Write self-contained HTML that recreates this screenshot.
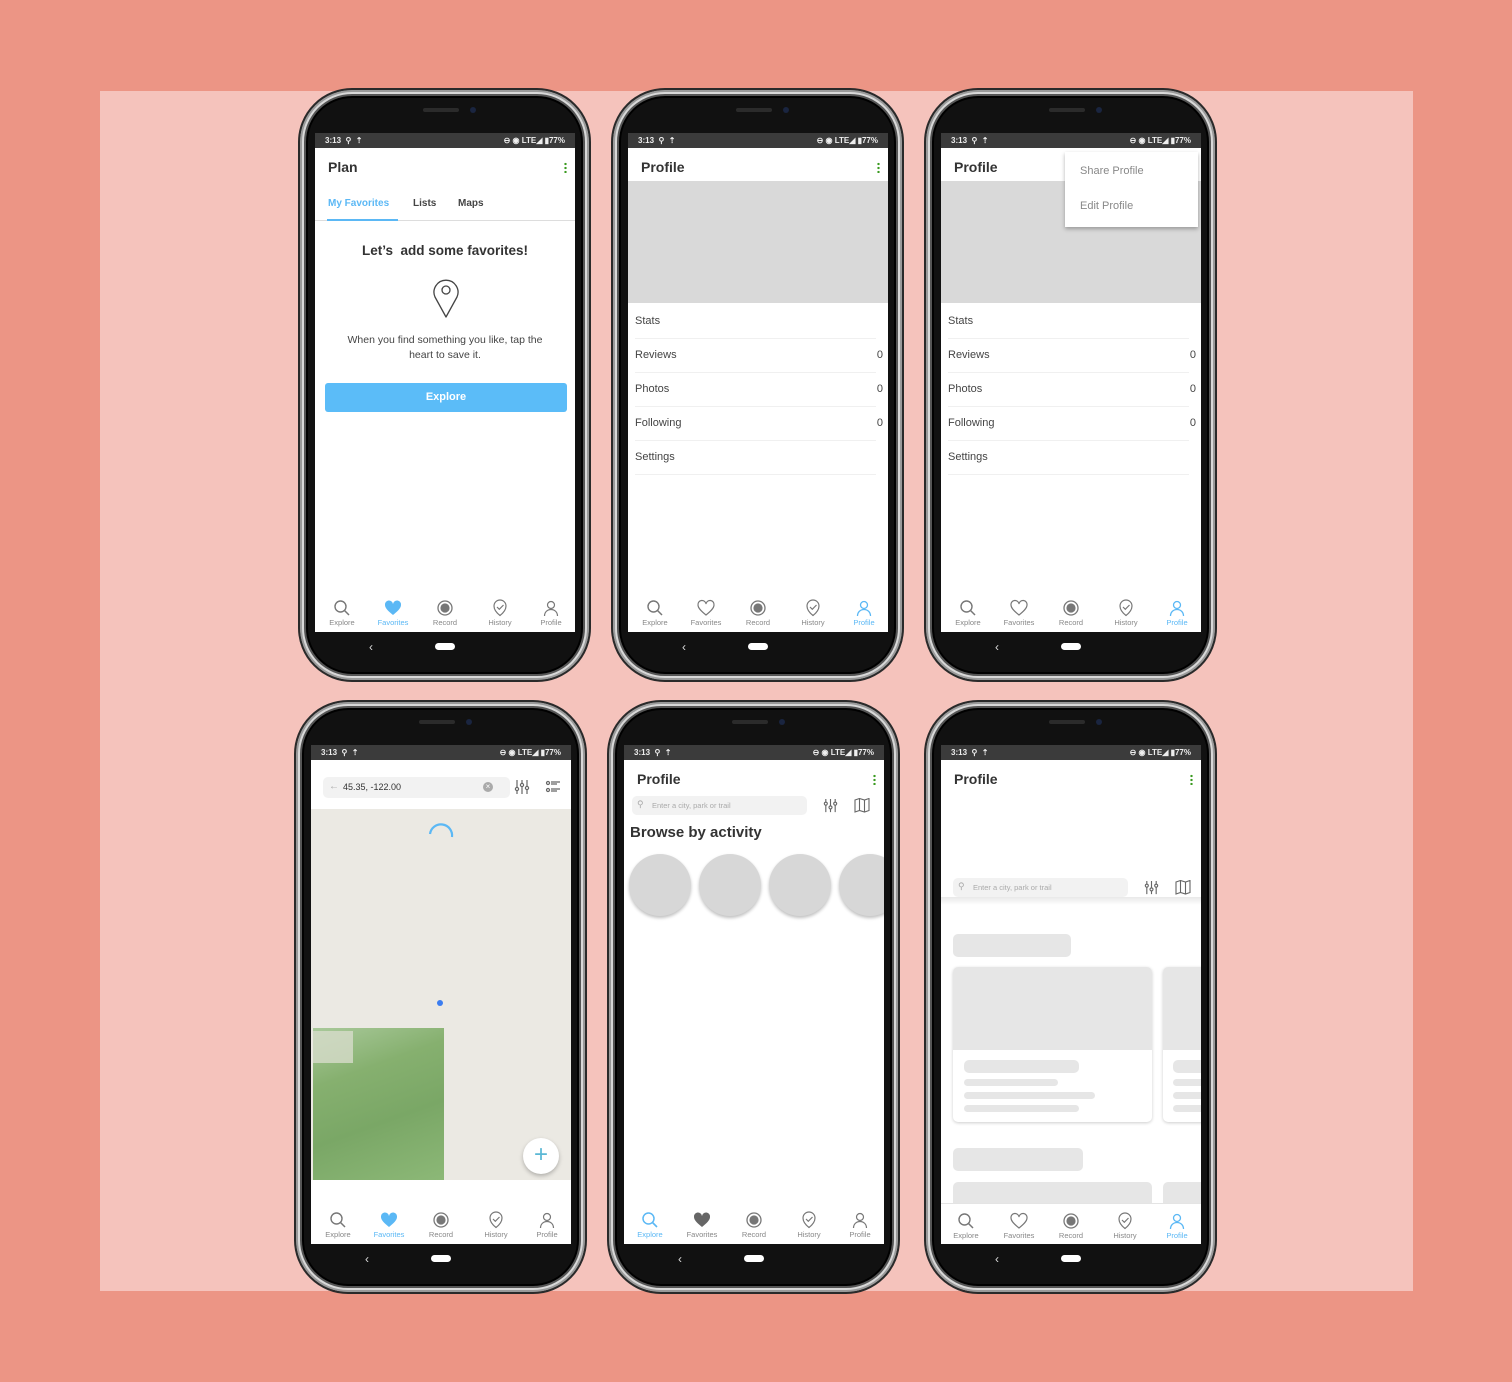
<!DOCTYPE html>
<html><head><meta charset="utf-8"><style>
*{margin:0;padding:0;box-sizing:border-box}
body{width:1512px;height:1382px;overflow:hidden;background:#ec9585;font-family:"Liberation Sans",sans-serif;position:relative;color:#444}
.panel{position:absolute;left:100px;top:91px;width:1313px;height:1200px;background:#f5c3bc}
.ph{position:absolute;width:293px;height:594px;border-radius:54px;background:#111;border:2px solid #2a2a2a;box-shadow:inset 0 0 0 2px #9a9a9a,inset 0 0 0 4px #d8d8d8,inset 0 0 0 6px #555,inset 0 0 0 8px #000}
.ph .spk{position:absolute;left:123px;top:18px;width:36px;height:4px;border-radius:2px;background:#2b2b2b}
.ph .cam{position:absolute;left:170px;top:17px;width:6px;height:6px;border-radius:3px;background:#1a2540}
.ph .back{position:absolute;left:69px;top:550px;color:#ddd;font-size:12px}
.ph .home{position:absolute;left:135px;top:553px;width:20px;height:7px;border-radius:4px;background:#fff}
.sc{position:absolute;left:15px;top:43px;width:260px;height:499px;background:#fff;overflow:hidden}
.sb{position:absolute;left:0;top:0;width:260px;height:15px;background:#3b3b3b;color:#eee;font-size:8px;font-weight:bold;line-height:15px}
.sb .l{position:absolute;left:10px}.sb .r{position:absolute;right:10px}
.a{position:absolute;white-space:nowrap}
.ttl{font-size:14px;font-weight:bold;color:#333}
.dots{position:absolute;width:3px;height:11px;background:radial-gradient(circle,#3a9a20 1.1px,transparent 1.3px) 0 0/3px 4px}
.tb{position:absolute;left:0;top:460px;width:260px;height:39px;background:#fff}
.tb .it{position:absolute;top:6px;width:50px;margin-left:-25px;text-align:center;font-size:7.5px;color:#888}
.tb .it svg{display:block;margin:0 auto 1px}
.tb .on{color:#5bb8f5}
.row{position:absolute;left:7px;width:241px;height:34px;border-bottom:1.5px solid #f0f0f0;font-size:11px;color:#444}
.row span{position:absolute;top:10px}
.row b{position:absolute;right:-7px;top:10px;font-weight:normal}
.sk{position:absolute;background:#e6e6e6;border-radius:5px}
</style></head><body>
<div class="panel"></div>

<!-- PHONE 1 -->
<div class="ph" style="left:298px;top:88px">
<div class="spk"></div><div class="cam"></div><div class="back">‹</div><div class="home"></div>
<div class="sc">
<div class="sb"><span class="l">3:13 &nbsp;⚲ &nbsp;⇡</span><span class="r">⊖ ◉ LTE◢ ▮77%</span></div>
<div class="a ttl" style="left:13px;top:26px">Plan</div>
<div class="dots" style="left:249px;top:29px"></div>
<div class="a" style="left:13px;top:65px;font-size:10px;font-weight:bold;color:#5bb8f5">My Favorites</div>
<div class="a" style="left:98px;top:65px;font-size:10px;font-weight:bold;color:#444">Lists</div>
<div class="a" style="left:143px;top:65px;font-size:10px;font-weight:bold;color:#444">Maps</div>
<div class="a" style="left:0;top:87px;width:260px;height:1px;background:#ddd"></div>
<div class="a" style="left:12px;top:86px;width:71px;height:2px;background:#5bb8f5"></div>
<div class="a" style="left:0;width:260px;text-align:center;top:110px;font-size:13.5px;font-weight:bold;color:#333">Let’s &nbsp;add some favorites!</div>
<svg class="a" style="left:117px;top:144px" width="28" height="42" viewBox="0 0 28 42"><path d="M14 40 L3 20 A12 12 0 1 1 25 20 Z" fill="none" stroke="#444" stroke-width="1.3" stroke-linejoin="round"/><circle cx="14" cy="13" r="4" fill="none" stroke="#444" stroke-width="1.3"/></svg>
<div class="a" style="left:0;width:260px;text-align:center;top:200px;font-size:10.5px;line-height:15px;color:#444;white-space:normal">When you find something you like, tap the<br>heart to save it.</div>
<div class="a" style="left:10px;top:250px;width:242px;height:29px;background:#5bbcf8;border-radius:3px;color:#fff;font-size:11px;font-weight:bold;text-align:center;line-height:29px">Explore</div>
<div class="tb">
<div class="it" style="left:27px"><svg width="18" height="18" viewBox="0 0 18 18"><circle cx="7.5" cy="7.5" r="5.5" fill="none" stroke="#777" stroke-width="1.4"/><path d="M11.5 11.5L16 16" stroke="#777" stroke-width="1.5"/></svg>Explore</div>
<div class="it on" style="left:78px"><svg width="18" height="18" viewBox="0 0 18 18"><path d="M9 16C4 12 1 9 1 6a4 4 0 0 1 8-1a4 4 0 0 1 8 1c0 3-3 6-8 10z" fill="#5bb8f5"/></svg>Favorites</div>
<div class="it" style="left:130px"><svg width="18" height="18" viewBox="0 0 18 18"><circle cx="9" cy="9" r="7" fill="none" stroke="#777" stroke-width="1.3"/><circle cx="9" cy="9" r="4.6" fill="#777"/></svg>Record</div>
<div class="it" style="left:185px"><svg width="18" height="18" viewBox="0 0 18 18"><path d="M9 16.5C4.5 13 3 10 3 7a6 6 0 0 1 12 0c0 3-1.5 6-6 9.5z" fill="none" stroke="#777" stroke-width="1.2"/><path d="M6 8l2.3 2.3L12.5 6" fill="none" stroke="#777" stroke-width="1.2"/></svg>History</div>
<div class="it" style="left:236px"><svg width="18" height="18" viewBox="0 0 18 18"><circle cx="9" cy="6" r="3.5" fill="none" stroke="#777" stroke-width="1.2"/><path d="M2.5 17c0-4 3-6.5 6.5-6.5s6.5 2.5 6.5 6.5" fill="none" stroke="#777" stroke-width="1.2"/></svg>Profile</div>
</div>
</div></div>

<!-- PHONE 2 -->
<div class="ph" style="left:611px;top:88px">
<div class="spk"></div><div class="cam"></div><div class="back">‹</div><div class="home"></div>
<div class="sc">
<div class="sb"><span class="l">3:13 &nbsp;⚲ &nbsp;⇡</span><span class="r">⊖ ◉ LTE◢ ▮77%</span></div>
<div class="a ttl" style="left:13px;top:26px">Profile</div>
<div class="dots" style="left:249px;top:29px"></div>
<div class="a" style="left:0;top:48px;width:260px;height:122px;background:#d9d9d9"></div>
<div class="row" style="top:172px"><span>Stats</span></div>
<div class="row" style="top:206px"><span>Reviews</span><b>0</b></div>
<div class="row" style="top:240px"><span>Photos</span><b>0</b></div>
<div class="row" style="top:274px"><span>Following</span><b>0</b></div>
<div class="row" style="top:308px"><span>Settings</span></div>
<div class="tb">
<div class="it" style="left:27px"><svg width="18" height="18" viewBox="0 0 18 18"><circle cx="7.5" cy="7.5" r="5.5" fill="none" stroke="#777" stroke-width="1.4"/><path d="M11.5 11.5L16 16" stroke="#777" stroke-width="1.5"/></svg>Explore</div>
<div class="it" style="left:78px"><svg width="18" height="18" viewBox="0 0 18 18"><path d="M9 16C4 12 1 9 1 6a4 4 0 0 1 8-1a4 4 0 0 1 8 1c0 3-3 6-8 10z" fill="none" stroke="#777" stroke-width="1.2"/></svg>Favorites</div>
<div class="it" style="left:130px"><svg width="18" height="18" viewBox="0 0 18 18"><circle cx="9" cy="9" r="7" fill="none" stroke="#777" stroke-width="1.3"/><circle cx="9" cy="9" r="4.6" fill="#777"/></svg>Record</div>
<div class="it" style="left:185px"><svg width="18" height="18" viewBox="0 0 18 18"><path d="M9 16.5C4.5 13 3 10 3 7a6 6 0 0 1 12 0c0 3-1.5 6-6 9.5z" fill="none" stroke="#777" stroke-width="1.2"/><path d="M6 8l2.3 2.3L12.5 6" fill="none" stroke="#777" stroke-width="1.2"/></svg>History</div>
<div class="it on" style="left:236px"><svg width="18" height="18" viewBox="0 0 18 18"><circle cx="9" cy="6" r="3.5" fill="none" stroke="#5bb8f5" stroke-width="1.3"/><path d="M2.5 17c0-4 3-6.5 6.5-6.5s6.5 2.5 6.5 6.5" fill="none" stroke="#5bb8f5" stroke-width="1.3"/></svg>Profile</div>
</div>
</div></div>

<!-- PHONE 3 -->
<div class="ph" style="left:924px;top:88px">
<div class="spk"></div><div class="cam"></div><div class="back">‹</div><div class="home"></div>
<div class="sc">
<div class="sb"><span class="l">3:13 &nbsp;⚲ &nbsp;⇡</span><span class="r">⊖ ◉ LTE◢ ▮77%</span></div>
<div class="a ttl" style="left:13px;top:26px">Profile</div>
<div class="a" style="left:0;top:48px;width:260px;height:122px;background:#d9d9d9"></div>
<div class="a" style="left:124px;top:19px;width:133px;height:75px;background:#fff;box-shadow:0 2px 4px rgba(0,0,0,.3)"></div>
<div class="a" style="left:139px;top:32px;font-size:11px;color:#888">Share Profile</div>
<div class="a" style="left:139px;top:67px;font-size:11px;color:#888">Edit Profile</div>
<div class="row" style="top:172px"><span>Stats</span></div>
<div class="row" style="top:206px"><span>Reviews</span><b>0</b></div>
<div class="row" style="top:240px"><span>Photos</span><b>0</b></div>
<div class="row" style="top:274px"><span>Following</span><b>0</b></div>
<div class="row" style="top:308px"><span>Settings</span></div>
<div class="tb">
<div class="it" style="left:27px"><svg width="18" height="18" viewBox="0 0 18 18"><circle cx="7.5" cy="7.5" r="5.5" fill="none" stroke="#777" stroke-width="1.4"/><path d="M11.5 11.5L16 16" stroke="#777" stroke-width="1.5"/></svg>Explore</div>
<div class="it" style="left:78px"><svg width="18" height="18" viewBox="0 0 18 18"><path d="M9 16C4 12 1 9 1 6a4 4 0 0 1 8-1a4 4 0 0 1 8 1c0 3-3 6-8 10z" fill="none" stroke="#777" stroke-width="1.2"/></svg>Favorites</div>
<div class="it" style="left:130px"><svg width="18" height="18" viewBox="0 0 18 18"><circle cx="9" cy="9" r="7" fill="none" stroke="#777" stroke-width="1.3"/><circle cx="9" cy="9" r="4.6" fill="#777"/></svg>Record</div>
<div class="it" style="left:185px"><svg width="18" height="18" viewBox="0 0 18 18"><path d="M9 16.5C4.5 13 3 10 3 7a6 6 0 0 1 12 0c0 3-1.5 6-6 9.5z" fill="none" stroke="#777" stroke-width="1.2"/><path d="M6 8l2.3 2.3L12.5 6" fill="none" stroke="#777" stroke-width="1.2"/></svg>History</div>
<div class="it on" style="left:236px"><svg width="18" height="18" viewBox="0 0 18 18"><circle cx="9" cy="6" r="3.5" fill="none" stroke="#5bb8f5" stroke-width="1.3"/><path d="M2.5 17c0-4 3-6.5 6.5-6.5s6.5 2.5 6.5 6.5" fill="none" stroke="#5bb8f5" stroke-width="1.3"/></svg>Profile</div>
</div>
</div></div>

<!-- PHONE 4 -->
<div class="ph" style="left:294px;top:700px">
<div class="spk"></div><div class="cam"></div><div class="back">‹</div><div class="home"></div>
<div class="sc">
<div class="sb"><span class="l">3:13 &nbsp;⚲ &nbsp;⇡</span><span class="r">⊖ ◉ LTE◢ ▮77%</span></div>
<div class="a" style="left:12px;top:32px;width:187px;height:21px;background:#f2f2f2;border-radius:5px"></div>
<div class="a" style="left:18px;top:36px;font-size:10px;color:#aaa">←</div>
<div class="a" style="left:32px;top:37px;font-size:9px;color:#333">45.35, -122.00</div>
<div class="a" style="left:172px;top:37px;width:10px;height:10px;border-radius:5px;background:#aaa;color:#fff;font-size:8px;line-height:10px;text-align:center">×</div>
<svg class="a" style="left:203px;top:34px" width="16" height="16" viewBox="0 0 16 16" fill="none" stroke="#666" stroke-width="1.2"><path d="M3 1v14M8 1v14M13 1v14"/><circle cx="3" cy="10" r="1.6" fill="#fff"/><circle cx="8" cy="6" r="1.6" fill="#fff"/><circle cx="13" cy="9" r="1.6" fill="#fff"/></svg>
<svg class="a" style="left:234px;top:34px" width="16" height="16" viewBox="0 0 16 16" fill="none" stroke="#666" stroke-width="1.2"><circle cx="3" cy="4" r="1.5"/><circle cx="3" cy="11" r="1.5"/><path d="M6 3h9M6 5h6M6 10h9M6 12h6"/></svg>
<div class="a" style="left:0;top:64px;width:260px;height:371px;background:#ebe9e3"></div>
<svg class="a" style="left:116px;top:76px" width="28" height="22" viewBox="0 0 28 22"><path d="M3 13A11 11 0 0 1 25 16" fill="none" stroke="#5bb8f5" stroke-width="2.2"/></svg>
<div class="a" style="left:126px;top:255px;width:6px;height:6px;border-radius:3px;background:#3b7df0"></div>
<div class="a" style="left:2px;top:283px;width:131px;height:152px;background:linear-gradient(160deg,#a9c99a 0%,#86b06f 30%,#7aa766 60%,#8cb877 100%)"></div>
<div class="a" style="left:2px;top:286px;width:40px;height:32px;background:#d7dccb;opacity:.8"></div>
<div class="a" style="left:212px;top:393px;width:36px;height:36px;border-radius:18px;background:#fff;box-shadow:0 2px 4px rgba(0,0,0,.25);color:#5bb8d5;font-size:24px;line-height:34px;text-align:center">+</div>
<div class="tb" style="top:435px;height:64px">
<div class="it" style="left:27px;top:31px"><svg width="18" height="18" viewBox="0 0 18 18"><circle cx="7.5" cy="7.5" r="5.5" fill="none" stroke="#777" stroke-width="1.4"/><path d="M11.5 11.5L16 16" stroke="#777" stroke-width="1.5"/></svg>Explore</div>
<div class="it on" style="left:78px;top:31px"><svg width="18" height="18" viewBox="0 0 18 18"><path d="M9 16C4 12 1 9 1 6a4 4 0 0 1 8-1a4 4 0 0 1 8 1c0 3-3 6-8 10z" fill="#5bb8f5"/></svg>Favorites</div>
<div class="it" style="left:130px;top:31px"><svg width="18" height="18" viewBox="0 0 18 18"><circle cx="9" cy="9" r="7" fill="none" stroke="#777" stroke-width="1.3"/><circle cx="9" cy="9" r="4.6" fill="#777"/></svg>Record</div>
<div class="it" style="left:185px;top:31px"><svg width="18" height="18" viewBox="0 0 18 18"><path d="M9 16.5C4.5 13 3 10 3 7a6 6 0 0 1 12 0c0 3-1.5 6-6 9.5z" fill="none" stroke="#777" stroke-width="1.2"/><path d="M6 8l2.3 2.3L12.5 6" fill="none" stroke="#777" stroke-width="1.2"/></svg>History</div>
<div class="it" style="left:236px;top:31px"><svg width="18" height="18" viewBox="0 0 18 18"><circle cx="9" cy="6" r="3.5" fill="none" stroke="#777" stroke-width="1.2"/><path d="M2.5 17c0-4 3-6.5 6.5-6.5s6.5 2.5 6.5 6.5" fill="none" stroke="#777" stroke-width="1.2"/></svg>Profile</div>
</div>
</div></div>

<!-- PHONE 5 -->
<div class="ph" style="left:607px;top:700px">
<div class="spk"></div><div class="cam"></div><div class="back">‹</div><div class="home"></div>
<div class="sc">
<div class="sb"><span class="l">3:13 &nbsp;⚲ &nbsp;⇡</span><span class="r">⊖ ◉ LTE◢ ▮77%</span></div>
<div class="a ttl" style="left:13px;top:26px">Profile</div>
<div class="dots" style="left:249px;top:29px"></div>
<div class="a" style="left:8px;top:51px;width:175px;height:19px;background:#f2f2f2;border-radius:5px"></div>
<div class="a" style="left:13px;top:54px;font-size:9px;color:#aaa">⚲</div>
<div class="a" style="left:28px;top:56px;font-size:7.5px;color:#aaa">Enter a city, park or trail</div>
<svg class="a" style="left:199px;top:53px" width="15" height="15" viewBox="0 0 16 16" fill="none" stroke="#666" stroke-width="1.2"><path d="M3 1v14M8 1v14M13 1v14"/><circle cx="3" cy="6" r="1.6" fill="#fff"/><circle cx="8" cy="10" r="1.6" fill="#fff"/><circle cx="13" cy="6" r="1.6" fill="#fff"/></svg>
<svg class="a" style="left:230px;top:53px" width="16" height="15" viewBox="0 0 16 15" fill="none" stroke="#666" stroke-width="1.1"><path d="M1 2l4.5-1.5 5 1.5 4.5-1.5v12l-4.5 1.5-5-1.5L1 14z M5.5 .5v12 M10.5 2v12"/></svg>
<div class="a" style="left:6px;top:79px;font-size:15px;font-weight:bold;color:#333">Browse by activity</div>
<div class="a" style="left:5px;top:109px;width:62px;height:62px;border-radius:31px;background:#d7d7d7;box-shadow:0 2px 3px rgba(0,0,0,.25)"></div>
<div class="a" style="left:75px;top:109px;width:62px;height:62px;border-radius:31px;background:#d7d7d7;box-shadow:0 2px 3px rgba(0,0,0,.25)"></div>
<div class="a" style="left:145px;top:109px;width:62px;height:62px;border-radius:31px;background:#d7d7d7;box-shadow:0 2px 3px rgba(0,0,0,.25)"></div>
<div class="a" style="left:215px;top:109px;width:62px;height:62px;border-radius:31px;background:#d7d7d7;box-shadow:0 2px 3px rgba(0,0,0,.25)"></div>
<div class="tb" style="top:460px">
<div class="it on" style="left:26px;top:6px"><svg width="18" height="18" viewBox="0 0 18 18"><circle cx="7.5" cy="7.5" r="5.5" fill="none" stroke="#5bb8f5" stroke-width="1.5"/><path d="M11.5 11.5L16 16" stroke="#5bb8f5" stroke-width="1.6"/></svg>Explore</div>
<div class="it" style="left:78px;top:6px"><svg width="18" height="18" viewBox="0 0 18 18"><path d="M9 16C4 12 1 9 1 6a4 4 0 0 1 8-1a4 4 0 0 1 8 1c0 3-3 6-8 10z" fill="#666"/></svg>Favorites</div>
<div class="it" style="left:130px;top:6px"><svg width="18" height="18" viewBox="0 0 18 18"><circle cx="9" cy="9" r="7" fill="none" stroke="#777" stroke-width="1.3"/><circle cx="9" cy="9" r="4.6" fill="#777"/></svg>Record</div>
<div class="it" style="left:185px;top:6px"><svg width="18" height="18" viewBox="0 0 18 18"><path d="M9 16.5C4.5 13 3 10 3 7a6 6 0 0 1 12 0c0 3-1.5 6-6 9.5z" fill="none" stroke="#777" stroke-width="1.2"/><path d="M6 8l2.3 2.3L12.5 6" fill="none" stroke="#777" stroke-width="1.2"/></svg>History</div>
<div class="it" style="left:236px;top:6px"><svg width="18" height="18" viewBox="0 0 18 18"><circle cx="9" cy="6" r="3.5" fill="none" stroke="#777" stroke-width="1.2"/><path d="M2.5 17c0-4 3-6.5 6.5-6.5s6.5 2.5 6.5 6.5" fill="none" stroke="#777" stroke-width="1.2"/></svg>Profile</div>
</div>
</div></div>

<!-- PHONE 6 -->
<div class="ph" style="left:924px;top:700px">
<div class="spk"></div><div class="cam"></div><div class="back">‹</div><div class="home"></div>
<div class="sc">
<div class="sb"><span class="l">3:13 &nbsp;⚲ &nbsp;⇡</span><span class="r">⊖ ◉ LTE◢ ▮77%</span></div>
<div class="a ttl" style="left:13px;top:26px">Profile</div>
<div class="dots" style="left:249px;top:29px"></div>
<div class="a" style="left:0;top:152px;width:260px;height:8px;background:linear-gradient(#e9e9e9,#fff)"></div>
<div class="a" style="left:12px;top:133px;width:175px;height:19px;background:#f2f2f2;border-radius:5px"></div>
<div class="a" style="left:17px;top:136px;font-size:9px;color:#aaa">⚲</div>
<div class="a" style="left:32px;top:138px;font-size:7.5px;color:#aaa">Enter a city, park or trail</div>
<svg class="a" style="left:203px;top:135px" width="15" height="15" viewBox="0 0 16 16" fill="none" stroke="#666" stroke-width="1.2"><path d="M3 1v14M8 1v14M13 1v14"/><circle cx="3" cy="6" r="1.6" fill="#fff"/><circle cx="8" cy="10" r="1.6" fill="#fff"/><circle cx="13" cy="6" r="1.6" fill="#fff"/></svg>
<svg class="a" style="left:234px;top:135px" width="16" height="15" viewBox="0 0 16 15" fill="none" stroke="#666" stroke-width="1.1"><path d="M1 2l4.5-1.5 5 1.5 4.5-1.5v12l-4.5 1.5-5-1.5L1 14z M5.5 .5v12 M10.5 2v12"/></svg>
<div class="sk" style="left:12px;top:189px;width:118px;height:23px"></div>
<div class="a" style="left:12px;top:222px;width:199px;height:155px;border-radius:5px;background:#fff;box-shadow:0 1px 3px rgba(0,0,0,.2);overflow:hidden"><div style="height:83px;background:#e6e6e6"></div></div>
<div class="sk" style="left:23px;top:315px;width:115px;height:13px"></div>
<div class="sk" style="left:23px;top:334px;width:94px;height:7px"></div>
<div class="sk" style="left:23px;top:347px;width:131px;height:7px"></div>
<div class="sk" style="left:23px;top:360px;width:115px;height:7px"></div>
<div class="a" style="left:222px;top:222px;width:60px;height:155px;border-radius:5px;background:#fff;box-shadow:0 1px 3px rgba(0,0,0,.2);overflow:hidden"><div style="height:83px;background:#e6e6e6"></div></div>
<div class="sk" style="left:232px;top:315px;width:40px;height:13px"></div>
<div class="sk" style="left:232px;top:334px;width:40px;height:7px"></div>
<div class="sk" style="left:232px;top:347px;width:40px;height:7px"></div>
<div class="sk" style="left:232px;top:360px;width:40px;height:7px"></div>
<div class="sk" style="left:12px;top:403px;width:130px;height:23px"></div>
<div class="a" style="left:12px;top:437px;width:199px;height:40px;border-radius:5px;background:#e6e6e6"></div>
<div class="a" style="left:222px;top:437px;width:60px;height:40px;border-radius:5px;background:#e6e6e6"></div>
<div class="tb" style="top:458px;height:41px;border-top:1px solid #e4e4e4">
<div class="it" style="left:25px;top:8px"><svg width="18" height="18" viewBox="0 0 18 18"><circle cx="7.5" cy="7.5" r="5.5" fill="none" stroke="#777" stroke-width="1.4"/><path d="M11.5 11.5L16 16" stroke="#777" stroke-width="1.5"/></svg>Explore</div>
<div class="it" style="left:78px;top:8px"><svg width="18" height="18" viewBox="0 0 18 18"><path d="M9 16C4 12 1 9 1 6a4 4 0 0 1 8-1a4 4 0 0 1 8 1c0 3-3 6-8 10z" fill="none" stroke="#777" stroke-width="1.2"/></svg>Favorites</div>
<div class="it" style="left:130px;top:8px"><svg width="18" height="18" viewBox="0 0 18 18"><circle cx="9" cy="9" r="7" fill="none" stroke="#777" stroke-width="1.3"/><circle cx="9" cy="9" r="4.6" fill="#777"/></svg>Record</div>
<div class="it" style="left:184px;top:8px"><svg width="18" height="18" viewBox="0 0 18 18"><path d="M9 16.5C4.5 13 3 10 3 7a6 6 0 0 1 12 0c0 3-1.5 6-6 9.5z" fill="none" stroke="#777" stroke-width="1.2"/><path d="M6 8l2.3 2.3L12.5 6" fill="none" stroke="#777" stroke-width="1.2"/></svg>History</div>
<div class="it on" style="left:236px;top:8px"><svg width="18" height="18" viewBox="0 0 18 18"><circle cx="9" cy="6" r="3.5" fill="none" stroke="#5bb8f5" stroke-width="1.3"/><path d="M2.5 17c0-4 3-6.5 6.5-6.5s6.5 2.5 6.5 6.5" fill="none" stroke="#5bb8f5" stroke-width="1.3"/></svg>Profile</div>
</div>
</div></div>

</body></html>
